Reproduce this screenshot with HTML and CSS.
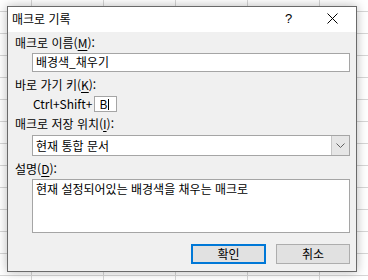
FILE: index.html
```html
<!DOCTYPE html>
<html lang="ko">
<head>
<meta charset="utf-8">
<title>매크로 기록</title>
<link rel="stylesheet" href="styles.css">
</head>
<body>
<div class="dialog">
  <div class="titlebar">
    <span class="title">매크로 기록</span>
    <span class="help">?</span>
    <span class="close">
      <svg width="11" height="11" viewBox="0 0 11 11"><path d="M0.5 0.5 L10.5 10.5 M10.5 0.5 L0.5 10.5" stroke="#000" stroke-width="1" fill="none"/></svg>
    </span>
  </div>
  <div class="content">
    <div class="label l1">매크로 이름(<u>M</u>):</div>
    <div class="field input1">배경색_채우기</div>
    <div class="label l2">바로 가기 키(<u>K</u>):</div>
    <div class="shortcut">
      <span class="ctrl">Ctrl+Shift+</span>
      <span class="keybox">B<span class="caret"></span></span>
    </div>
    <div class="label l3">매크로 저장 위치(<u>I</u>):</div>
    <div class="field select">
      <span class="seltext">현재 통합 문서</span>
      <span class="dropbtn"><svg width="9" height="5" viewBox="0 0 9 5"><path d="M0.5 0.5 L4.5 4.5 L8.5 0.5" stroke="#606060" stroke-width="1" fill="none"/></svg></span>
    </div>
    <div class="label l4">설명(<u>D</u>):</div>
    <div class="field textarea">현재 설정되어있는 배경색을 채우는 매크로</div>
    <div class="buttons">
      <span class="btn ok">확인</span>
      <span class="btn cancel">취소</span>
    </div>
  </div>
</div>
</body>
</html>
```
FILE: styles.css
```css
html, body {
  margin: 0;
  padding: 0;
}
body {
  width: 368px;
  height: 280px;
  overflow: hidden;
  background-color: #ffffff;
  background-image:
    linear-gradient(to right, #d6d6d6 1px, transparent 1px),
    linear-gradient(to bottom, #d6d6d6 1px, transparent 1px);
  background-size: 72px 22px;
  background-position: 31px 11px;
  font-family: "Noto Sans CJK KR", "Noto Sans", sans-serif;
  font-size: 12px;
  color: #000;
  padding-top: 6px;
  padding-left: 7px;
  box-sizing: border-box;
}
.dialog {
  width: 350px;
  height: 266px;
  box-sizing: border-box;
  border: 1px solid #6a6a6a;
  background: #f0f0f0;
  box-shadow: 0 0 10px rgba(0,0,0,0.28);
  display: flex;
  flex-direction: column;
}
.titlebar {
  height: 25px;
  background: #ffffff;
  display: flex;
  align-items: center;
  position: relative;
}
.title {
  margin-left: 4px;
  line-height: 16px;
  margin-top: -1px;
}
.help {
  position: absolute;
  left: 277px;
  top: 4px;
  font-family: "Liberation Sans", sans-serif;
  font-size: 13px;
  line-height: 16px;
}
.close {
  position: absolute;
  left: 319px;
  top: 6px;
  width: 11px;
  height: 11px;
  display: flex;
}
.content {
  flex: 1;
  display: flex;
  flex-direction: column;
  padding: 3px 6px 0 7px;
}
.label {
  line-height: 16px;
  height: 16px;
}
.label u {
  text-underline-offset: 2px;
}
.field {
  margin-left: 17px;
  background: #fff;
  border: 1px solid #a5a5a5;
  box-sizing: border-box;
  line-height: 16px;
  padding-left: 3px;
}
.input1 {
  margin-top: 2px;
  height: 19px;
}
.l2 { margin-top: 5px; }
.shortcut {
  margin-top: 3px;
  margin-left: 18px;
  display: flex;
  align-items: center;
  height: 16px;
}
.ctrl {
  line-height: 16px;
  margin-right: 2px;
}
.keybox {
  width: 23px;
  height: 16px;
  box-sizing: border-box;
  border: 1px solid #a5a5a5;
  background: #fff;
  line-height: 14px;
  padding-left: 4px;
  display: flex;
  align-items: center;
}
.caret {
  display: inline-block;
  width: 1px;
  height: 11px;
  background: #000;
  margin-left: 1px;
}
.l3 { margin-top: 4px; }
.select {
  margin-top: 3px;
  height: 21px;
  display: flex;
  align-items: center;
  justify-content: space-between;
  padding-right: 0;
}
.seltext { line-height: 16px; }
.dropbtn {
  width: 18px;
  height: 19px;
  box-sizing: border-box;
  border-left: 1px solid #c6c6c6;
  background: #e6e6e6;
  display: flex;
  align-items: center;
  justify-content: center;
}
.l4 { margin-top: 5px; }
.textarea {
  margin-top: 2px;
  height: 54px;
  padding-top: 1px;
}
.buttons {
  margin-top: 11px;
  display: flex;
  justify-content: flex-end;
  gap: 10px;
}
.btn {
  height: 20px;
  box-sizing: border-box;
  background: #e1e1e1;
  border: 1px solid #adadad;
  display: flex;
  align-items: center;
  justify-content: center;
  line-height: 16px;
}
.ok {
  width: 75px;
  border: 2px solid #0078d7;
}
.cancel {
  width: 74px;
}
```
